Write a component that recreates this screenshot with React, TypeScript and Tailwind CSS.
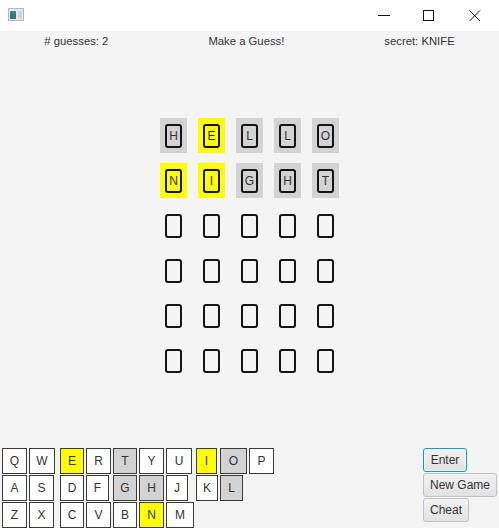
import React from "react";

type Tile = { ch: string; color: "gray" | "yellow" | "none" };

const guesses: Tile[][] = [
  [
    { ch: "H", color: "gray" },
    { ch: "E", color: "yellow" },
    { ch: "L", color: "gray" },
    { ch: "L", color: "gray" },
    { ch: "O", color: "gray" },
  ],
  [
    { ch: "N", color: "yellow" },
    { ch: "I", color: "yellow" },
    { ch: "G", color: "gray" },
    { ch: "H", color: "gray" },
    { ch: "T", color: "gray" },
  ],
];

const empty: Tile[] = Array.from({ length: 5 }, () => ({ ch: "", color: "none" }));
const board: Tile[][] = [...guesses, empty, empty, empty, empty];

// [letter, width, state]
const keyRows: [string, string, string][][] = [
  [
    ["Q", "w-[25px]", ""],
    ["W", "w-[26px]", ""],
    ["E", "w-[24px]", "yellow"],
    ["R", "w-[25px]", ""],
    ["T", "w-[24px]", "gray"],
    ["Y", "w-[25px]", ""],
    ["U", "w-[26px]", ""],
    ["I", "w-[21px]", "yellow"],
    ["O", "w-[27px]", "gray"],
    ["P", "w-[25px]", ""],
  ],
  [
    ["A", "w-[25px]", ""],
    ["S", "w-[25px]", ""],
    ["D", "w-[24px]", ""],
    ["F", "w-[23px]", ""],
    ["G", "w-[24px]", "gray"],
    ["H", "w-[25px]", "gray"],
    ["J", "w-[22px]", ""],
    ["K", "w-[22px]", ""],
    ["L", "w-[23px]", "gray"],
  ],
  [
    ["Z", "w-[25px]", ""],
    ["X", "w-[25px]", ""],
    ["C", "w-[24px]", ""],
    ["V", "w-[25px]", ""],
    ["B", "w-[24px]", ""],
    ["N", "w-[25px]", "yellow"],
    ["M", "w-[28px]", ""],
  ],
];

function TitleBar() {
  return (
    <div className="h-[31px] bg-white flex items-center">
      <svg width="16" height="13" viewBox="0 0 16 13" className="ml-[8px] mb-[2px]">
        <rect x="0.5" y="0.5" width="15" height="12" fill="#e8e8e8" stroke="#b8b8b8" />
        <rect x="2" y="3" width="6" height="8" fill="#2e7d6b" />
        <rect x="2" y="3" width="6" height="3" fill="#3b7fb0" />
        <rect x="10" y="3" width="4" height="8" fill="#d0d6dc" />
      </svg>
      <div className="flex-1" />
      <svg width="12" height="2" viewBox="0 0 12 2" className="mr-[33px]">
        <rect x="0" y="0" width="12" height="1" fill="#111" />
      </svg>
      <svg width="12" height="12" viewBox="0 0 12 12" className="mr-[34px]">
        <rect x="0.5" y="0.5" width="10" height="10" fill="none" stroke="#111" />
      </svg>
      <svg width="12" height="12" viewBox="0 0 12 12" className="mr-[18px]">
        <path d="M0.5 0.5 L11 11 M11 0.5 L0.5 11" stroke="#111" strokeWidth="1" />
      </svg>
    </div>
  );
}

function BoardCell({ tile }: { tile: Tile }) {
  const bg =
    tile.color === "gray" ? "bg-[#d3d3d3]" : tile.color === "yellow" ? "bg-[#ffff00]" : "";
  return (
    <div className={`w-[27px] h-[35px] flex items-center justify-center ${bg}`}>
      <div className="w-[17px] h-[24px] border-2 border-[#151515] rounded-[3px] flex items-center justify-center text-[12px] leading-none text-[#333]">
        {tile.ch}
      </div>
    </div>
  );
}

function Key({ ch, width, state }: { ch: string; width: string; state: string }) {
  const bg =
    state === "gray" ? "bg-[#d3d3d3]" : state === "yellow" ? "bg-[#ffff00]" : "bg-white";
  return (
    <div
      className={`${width} h-[26px] ${bg} border border-[#3a3a3a] flex items-center justify-center text-[12px] text-[#333]`}
    >
      {ch}
    </div>
  );
}

function SideButton({ label, width, focused }: { label: string; width: string; focused?: boolean }) {
  return (
    <div
      className={`${width} h-[24px] rounded-[3px] flex items-center justify-center text-[12px] text-[#333] bg-gradient-to-b from-[#f2f2f2] to-[#e2e2e2] ${
        focused
          ? "border border-[#039ed3] shadow-[inset_0_0_0_1px_#ffffff]"
          : "border border-[#c2c2c2]"
      }`}
    >
      {label}
    </div>
  );
}

export default function App() {
  return (
    <div
      className="w-[499px] h-[528px] overflow-hidden flex flex-col bg-[#f4f4f4]"
      style={{ fontFamily: '"Segoe UI", "Liberation Sans", Arial, sans-serif' }}
    >
      <TitleBar />
      <div className="h-[19px] flex items-center justify-center gap-[100px] text-[11.3px] text-[#333] pt-[1px]">
        <span># guesses: 2</span>
        <span>Make a Guess!</span>
        <span>secret: KNIFE</span>
      </div>
      <div className="mt-[68px] flex flex-col items-center gap-[10px]">
        {board.map((row, r) => (
          <div key={r} className="flex gap-[11px]">
            {row.map((t, c) => (
              <BoardCell key={c} tile={t} />
            ))}
          </div>
        ))}
      </div>
      <div className="mt-[70px] h-[80px] flex justify-between">
        <div className="pl-[2px] flex flex-col gap-[1px]">
          {keyRows.map((row, r) => (
            <div
              key={r}
              className="grid grid-cols-[27px_31px_26px_27px_26px_27px_30px_24px_29px_26px]"
            >
              {row.map(([ch, w, s]) => (
                <Key key={ch} ch={ch} width={w} state={s} />
              ))}
            </div>
          ))}
        </div>
        <div className="flex flex-col items-start gap-[1px] pr-[2px] w-[76px]">
          <SideButton label="Enter" width="w-[44px]" focused />
          <SideButton label="New Game" width="w-[74px]" />
          <SideButton label="Cheat" width="w-[46px]" />
        </div>
      </div>
    </div>
  );
}
